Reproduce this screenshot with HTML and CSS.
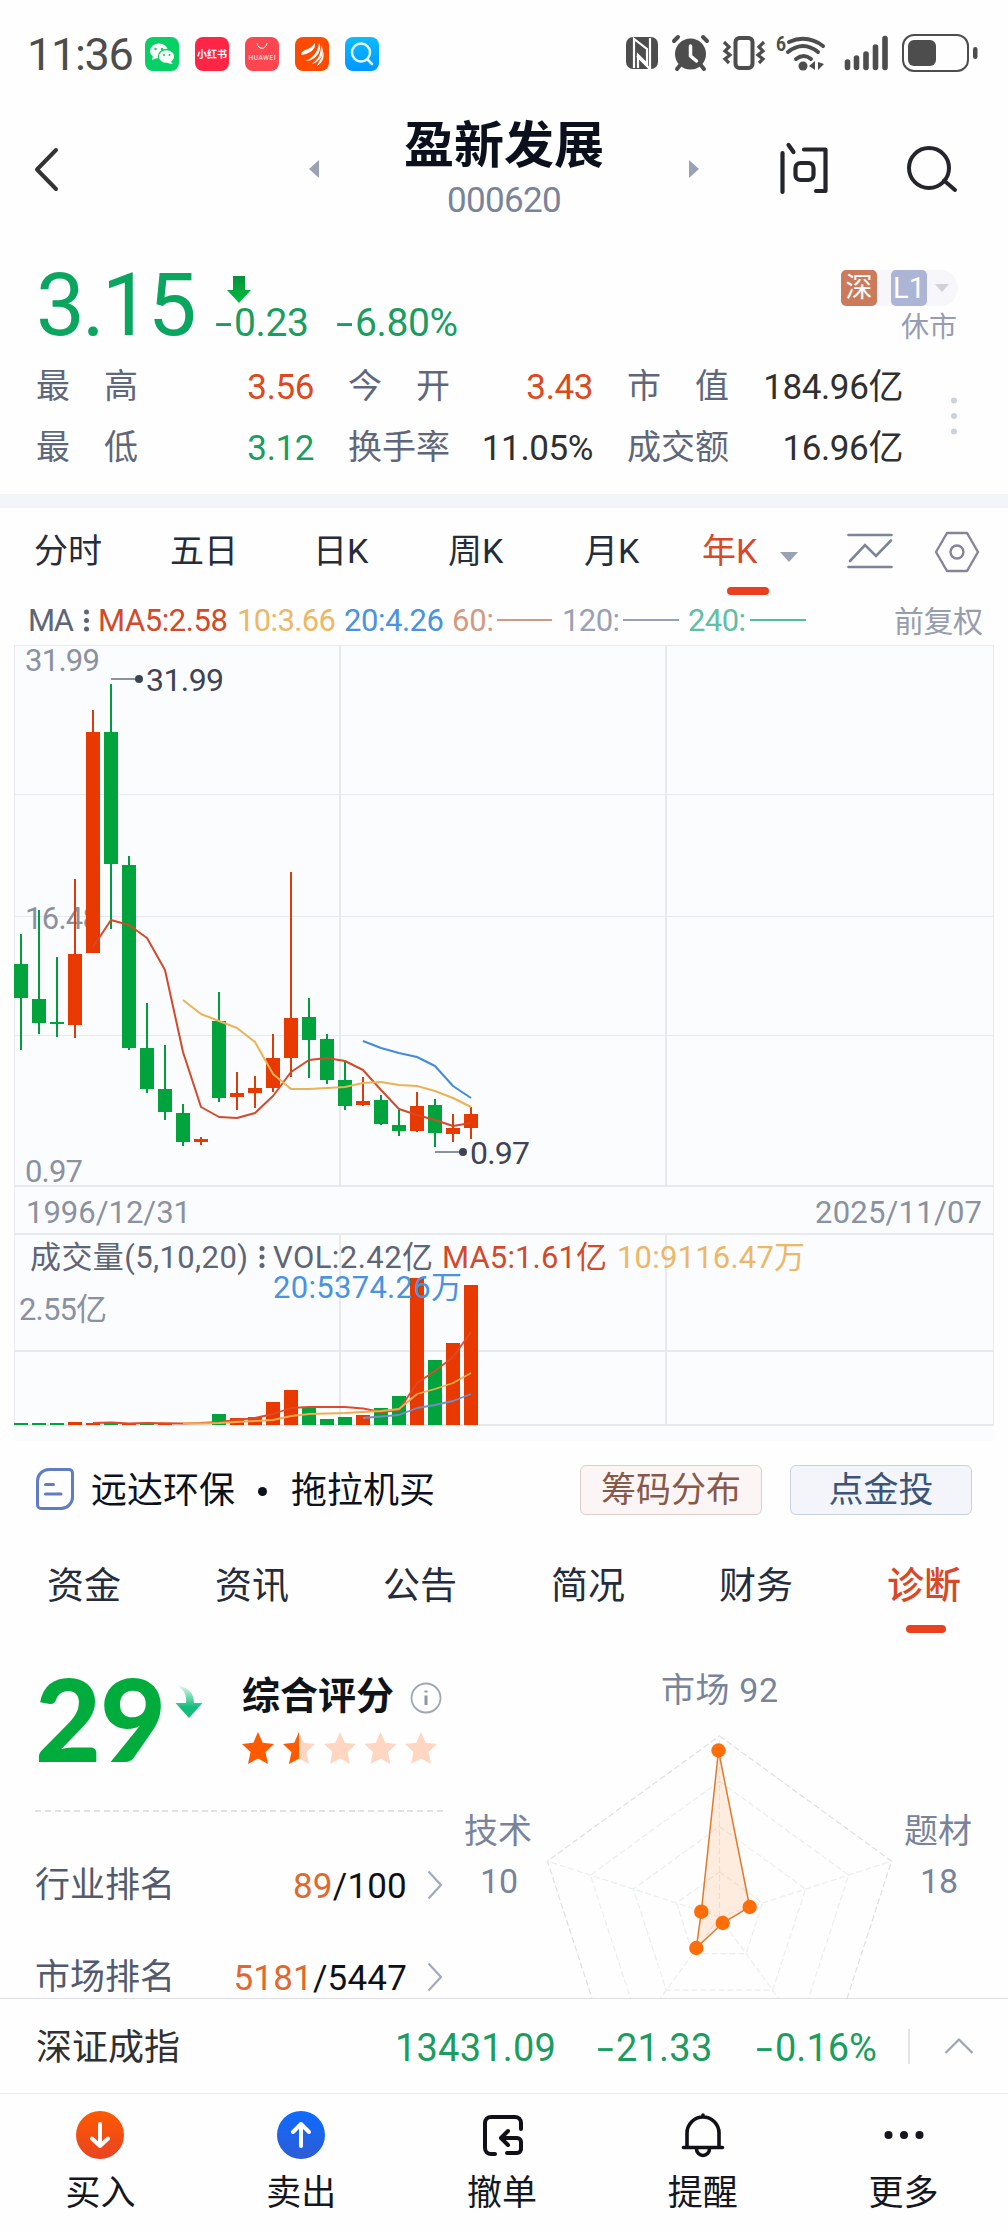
FILE: index.html
```html
<!DOCTYPE html>
<html lang="zh-CN">
<head>
<meta charset="utf-8">
<title>盈新发展 000620</title>
<link rel="stylesheet" href="styles.css">
</head>
<body>
<div class="status">
  <span class="clock">11:36</span>
  <div class="apps">
    <svg class="app wechat" viewBox="0 0 34 34"><g fill="#fff"><ellipse cx="14" cy="14" rx="9" ry="7.5"/><path d="M8 19l-1 4 5-2z"/></g><ellipse cx="21.500" cy="19.500" rx="8.200" ry="7" fill="#fff" stroke="#08cf66" stroke-width="1.300"/><path d="M25 24l3 3-6-1z" fill="#fff"/><g fill="#08cf66"><circle cx="10.500" cy="12" r="1.200"/><circle cx="17" cy="12" r="1.200"/><circle cx="19" cy="18" r="1"/><circle cx="24.500" cy="18" r="1"/></g></svg>
    <span class="app red-book">小红书</span>
    <svg class="app huawei" viewBox="0 0 34 34"><path d="M12 6c1 7 9 7 10 0" fill="none" stroke="#fff" stroke-width="1"/><text x="3.500" y="22.500" textLength="27" fill="#fff" font-size="6.500">HUAWEI</text></svg>
    <svg class="app wing" viewBox="0 0 34 34"><path d="M6 18C7 11 15 14 20 6c1 7-6 11-14 12zM11 24c8-4 12-10 13-18 4 8-4 18-13 18zM17 27c7-5 9-11 9-19 5 8-1 17-9 19zM22 29c1-4 6-8 6-15 2 7-1 12-6 15z" fill="#fff"/></svg>
    <svg class="app finder" viewBox="0 0 34 34"><circle cx="16" cy="15.500" r="9" fill="none" stroke="#e5fbff" stroke-width="2.500"/><path d="M22 22l5 5" stroke="#e5fbff" stroke-width="2.500" stroke-linecap="round"/></svg>
  </div>
  <svg class="signals" viewBox="620 30 362 46" fill="#4d4d4d">
    <rect x="626" y="37" width="32" height="32" rx="7"/>
    <path d="M634 68V39l13 10v15l-9-9v13M650 38v31l-13-13" fill="none" stroke="#fff" stroke-width="2.200"/>
    <circle cx="690.500" cy="54" r="15.500"/>
    <path d="M674 41l4-4M703 37l4 4M677 69l4-5M704 69l-4-5" stroke="#4d4d4d" stroke-width="4" stroke-linecap="round"/>
    <path d="M690.500 46v10l6 5" fill="none" stroke="#fff" stroke-width="3.500" stroke-linecap="round"/>
    <rect x="735.500" y="38" width="17" height="30" rx="4" fill="none" stroke="#4d4d4d" stroke-width="4"/>
    <path d="M724 42l5 5-4 4 5 4-5 4 4 4M764 42l-5 5 4 4-5 4 5 4-4 4" fill="none" stroke="#4d4d4d" stroke-width="3.200"/>
    <text x="776" y="51" font-size="20" font-weight="700" textLength="10" lengthAdjust="spacingAndGlyphs">6</text>
    <path d="M789 42q18-8 34 4M788 52q15-12 30 0M796 59q8-6 15 0" fill="none" stroke="#4d4d4d" stroke-width="4" stroke-linecap="round"/>
    <circle cx="803" cy="66" r="4.500"/><path d="M809 66l6-5v9zM824 64l-6-2v8z"/>
    <path d="M847.500 62v5.500M856.500 58v9.500M866 54v13.500M875.500 47v20.500M885 38.500v29" stroke="#4d4d4d" stroke-width="5.600" stroke-linecap="round"/>
    <rect x="903" y="35" width="65" height="36" rx="11" fill="none" stroke="#4d4d4d" stroke-width="2"/>
    <rect x="908" y="40" width="28" height="26" rx="6"/><rect x="973" y="47" width="4.500" height="12" rx="2.200"/>
  </svg>
</div>

<header class="head">
  <svg class="back" viewBox="0 0 28 48"><path d="M24 4L5 23.500 24 43" fill="none" stroke="#333" stroke-width="4" stroke-linecap="round" stroke-linejoin="round"/></svg>
  <i class="tri left"></i>
  <div class="stock"><h1>盈新发展</h1><p>000620</p></div>
  <i class="tri right"></i>
  <svg class="ask" viewBox="0 0 52 54"><g fill="none" stroke="#24262b" stroke-width="4.200" stroke-linecap="round" stroke-linejoin="round"><path d="M4.500 11v39M10.500 3l5 7M26 7.500h21.500V49H38"/><rect x="17.500" y="21" width="18" height="17" rx="5"/></g></svg>
  <svg class="find" viewBox="0 0 54 50"><g fill="none" stroke="#24262b" stroke-width="4" stroke-linecap="round"><circle cx="24" cy="24" r="20"/><path d="M39 36.500l11 9.500"/></g></svg>
</header>

<section class="quote">
  <div class="price-row">
    <strong class="price">3.15</strong>
    <div class="change">
      <svg class="drop" viewBox="0 0 24 27"><defs><linearGradient id="dg" x2="0" y2="1"><stop stop-color="#07903a"/><stop offset="1" stop-color="#00bd42"/></linearGradient></defs><path d="M6 0h12v14h6L12 27 0 14h6z" fill="url(#dg)"/></svg>
      <div class="delta"><span><b class="neg">-</b>0.23</span><span><b class="neg">-</b>6.80%</span></div>
    </div>
    <div class="market">
      <div class="badges"><span class="sz">深</span><span class="lv">L1</span><i class="tri down pale"></i></div>
      <span class="closed">休市</span>
    </div>
  </div>
  <div class="stats-wrap">
    <dl class="stats">
      <dt><span>最</span><span>高</span></dt><dd class="up">3.56</dd>
      <dt><span>今</span><span>开</span></dt><dd class="up">3.43</dd>
      <dt><span>市</span><span>值</span></dt><dd>184.96亿</dd>
      <dt><span>最</span><span>低</span></dt><dd class="dn">3.12</dd>
      <dt>换手率</dt><dd>11.05%</dd>
      <dt>成交额</dt><dd>16.96亿</dd>
    </dl>
    <svg class="kebab" viewBox="0 0 6 38"><g fill="#cbd2dc"><circle cx="3" cy="3.500" r="3"/><circle cx="3" cy="19" r="3"/><circle cx="3" cy="34.500" r="3"/></g></svg>
  </div>
</section>

<nav class="periods">
  <span>分时</span><span>五日</span><span>日K</span><span>周K</span><span>月K</span><span class="on">年K</span>
  <i class="tri down"></i>
  <svg class="p-line" viewBox="0 0 46 38"><g fill="none" stroke="#7b8596" stroke-width="2.600" stroke-linecap="round"><path d="M1.500 3h43M1.500 35h43"/><path d="M3 29l15-16 11 11L44 8.500"/></g></svg>
  <svg class="p-hex" viewBox="0 0 46 42"><g fill="none" stroke="#85859a" stroke-width="2.400" stroke-linejoin="round"><path d="M13 2h20l11 19-11 19H13L2 21z"/><circle cx="23" cy="21" r="6.500"/></g></svg>
</nav>

<svg class="legend" viewBox="0 600 1008 45" font-size="31">
  <text x="28" y="631" textLength="46" fill="#5d6576">MA</text>
  <g fill="#5d6576"><circle cx="86.500" cy="612" r="2.500"/><circle cx="86.500" cy="620.500" r="2.500"/><circle cx="86.500" cy="629" r="2.500"/></g>
  <text x="98" y="631" textLength="130" fill="#d24a2b">MA5:2.58</text>
  <text x="237" y="631" textLength="99" fill="#ecb868">10:3.66</text>
  <text x="344" y="631" textLength="100" fill="#4a93de">20:4.26</text>
  <text x="452" y="631" textLength="42" fill="#d29a83">60:</text>
  <text x="562" y="631" textLength="58" fill="#9aa1b7">120:</text>
  <text x="688" y="631" textLength="58" fill="#61bfa6">240:</text>
  <g stroke-width="2"><path d="M497 620h55" stroke="#d29a83"/><path d="M623 620h56" stroke="#9aa1b7"/><path d="M750 620h56" stroke="#4fbfa1"/></g>
  <text x="894" y="632" font-size="30" textLength="89" fill="#979dac">前复权</text>
</svg>

<svg class="chart" viewBox="0 645 1008 796" font-size="31">
  <rect x="14" y="645" width="980" height="796" fill="#fbfcfe"/>
  <g fill="none" stroke="#e7e9ef"><path d="M14.500 1425V645.500h979V1425" stroke-width="1"/><path d="M14 794.500h980M14 916.500h980M14 1035.500h980" stroke-width="1.200"/><path d="M340 645v541M666 645v541M340 1234v191M666 1234v191M14 1186h980M14 1234h980M14 1351h980M14 1425h980" stroke-width="2"/></g>
  <g fill="#8a91a0">
    <text x="25" y="671" textLength="75">31.99</text>
    <text x="25" y="929" textLength="75">16.48</text>
    <text x="25" y="1182" textLength="58">0.97</text>
    <text x="26" y="1223" textLength="165">1996/12/31</text>
    <text x="815" y="1223" textLength="167">2025/11/07</text>
    <text x="19" y="1320" textLength="88">2.55亿</text>
  </g>
  <g stroke-width="2">
    <path stroke="#009d3d" d="M21 934V1050M39 910V1034M57 957V1037M111 684V929M129 856V1050M147 1003V1093M165 1045V1120M183 1104V1146M219 992V1102M309 998V1078M327 1034V1084M345 1062V1110M381 1095V1125M399 1110V1136M435 1099V1147"/>
    <path stroke="#dc3b0c" d="M75 879V1038M93 710V953M201 1137V1145M237 1072V1110M255 1076V1108M273 1034V1092M291 872V1077M363 1077V1106M417 1092V1132M453 1114V1142M471 1107V1139"/>
  </g>
  <path fill="#01a33c" d="M14 964h14v34h-14zM32 999h14v24h-14zM50 1022h14v2h-14zM104 732h14v132h-14zM122 865h14v183h-14zM140 1048h14v41h-14zM158 1089h14v23h-14zM176 1113h14v29h-14zM212 1021h14v77h-14zM302 1017h14v23h-14zM320 1039h14v41h-14zM338 1080h14v26h-14zM374 1100h14v24h-14zM392 1125h14v6h-14zM428 1105h14v28h-14z"/>
  <path fill="#e83900" d="M68 954h14v71h-14zM86 732h14v221h-14zM194 1139h14v3h-14zM230 1093h14v4h-14zM248 1088h14v5h-14zM266 1058h14v30h-14zM284 1018h14v40h-14zM356 1101h14v4h-14zM410 1106h14v25h-14zM446 1128h14v6h-14zM464 1114h14v14h-14z"/>
  <g fill="none" stroke-width="2" stroke-linejoin="round">
    <path stroke="#d24a2b" d="M93 947L111 920L129 925L147 938L165 970L183 1052L201 1107L219 1117L237 1118L255 1113L273 1096L291 1072L309 1060L327 1058L345 1061L363 1070L381 1090L399 1109L417 1115L435 1120L453 1126L471 1123"/>
    <path stroke="#ecb256" d="M183 1000L201 1014L219 1021L237 1028L255 1042L273 1074L291 1089L309 1089L327 1088L345 1087L363 1083L381 1082L399 1085L417 1086L435 1091L453 1098L471 1107"/>
    <path stroke="#438bd8" d="M363 1041L381 1048L399 1053L417 1057L435 1066L453 1086L471 1098"/>
  </g>
  <path d="M111 679h28M435 1152h28" stroke="#8d929c" stroke-width="2"/>
  <g fill="#3e4453"><circle cx="139" cy="679" r="4"/><circle cx="463" cy="1152" r="4"/><text x="146" y="691" font-size="32" textLength="78">31.99</text><text x="470" y="1164" font-size="32" textLength="60">0.97</text></g>

  <path fill="#01a33c" d="M14 1423h14v2h-14zM32 1423h14v2h-14zM50 1423h14v2h-14zM104 1423h14v2h-14zM140 1423h14v2h-14zM212 1414h14v11h-14zM302 1407h14v18h-14zM320 1419h14v6h-14zM338 1417h14v8h-14zM374 1408h14v17h-14zM392 1396h14v29h-14zM428 1360h14v65h-14z"/>
  <path fill="#e83900" d="M68 1422h14v3h-14zM86 1423h14v2h-14zM122 1424h14v1h-14zM158 1424h14v1h-14zM230 1418h14v7h-14zM248 1417h14v8h-14zM266 1402h14v23h-14zM284 1390h14v35h-14zM356 1415h14v10h-14zM410 1278h14v147h-14zM446 1343h14v82h-14zM464 1285h14v140h-14z"/>
  <g fill="none" stroke-width="1.800" stroke-linejoin="round">
    <path stroke="#e04a2a" d="M93 1423L111 1422.500L129 1423.500L147 1423L183 1423.500L201 1423L219 1422L237 1420L255 1418L273 1414L291 1408L309 1407L345 1407L363 1408.500L381 1412L399 1410L417 1383L435 1371L453 1357L471 1332"/>
    <path stroke="#f2ac4c" d="M183 1423L201 1423.500L219 1423L255 1421L273 1420L291 1416L309 1414L345 1413L381 1411L399 1409L417 1394L435 1389L453 1383L471 1373"/>
    <path stroke="#6f8fcb" d="M363 1418L399 1415L417 1408L435 1405L453 1401L471 1394"/>
  </g>
  <g fill="#5d6576">
    <text x="30" y="1268" textLength="218">成交量(5,10,20)</text>
    <circle cx="262" cy="1248.500" r="2.500"/><circle cx="262" cy="1257" r="2.500"/><circle cx="262" cy="1265.500" r="2.500"/>
    <text x="273" y="1268" textLength="160">VOL:2.42亿</text>
  </g>
  <text x="442" y="1268" textLength="165" fill="#d24a2b">MA5:1.61亿</text>
  <text x="617" y="1268" textLength="188" fill="#ecb868">10:9116.47万</text>
  <text x="273" y="1298" textLength="189" fill="#4a93de">20:5374.26万</text>
</svg>

<section class="notice">
  <svg class="doc" viewBox="0 0 38 42"><g fill="none" stroke="#5f7dc4" stroke-width="3" stroke-linecap="round"><path d="M13 1.500h20a3.500 3.500 0 0 1 3.500 3.500v24a11.500 11.500 0 0 1-11.500 11.500H5A3.500 3.500 0 0 1 1.500 37V13A11.500 11.500 0 0 1 13 1.500z"/><path d="M9.500 16.500h8M9.500 26h15.500"/></g></svg>
  <p><span>远达环保</span><b class="bullet"></b><span>拖拉机买</span></p>
  <button class="pill chips">筹码分布</button>
  <button class="pill gold">点金投</button>
</section>

<nav class="tabs"><span>资金</span><span>资讯</span><span>公告</span><span>简况</span><span>财务</span><span class="on">诊断</span></nav>

<section class="diagnosis">
  <div class="scores">
    <div class="total">
      <strong>29</strong>
      <svg class="curve" viewBox="0 0 28 32"><defs><linearGradient id="cg" x2="0" y2="1"><stop stop-color="#d9f5ea"/><stop offset=".65" stop-color="#15bd7d"/></linearGradient></defs><path d="M3 0c9 1 16 6 16 17h8.500L14 32 .5 17H11C12 9 9 4 3 0z" fill="url(#cg)"/></svg>
      <div class="rating">
        <h2>综合评分 <svg class="info" viewBox="0 0 32 32"><circle cx="16" cy="16" r="14.500" fill="none" stroke="#a0a6b8" stroke-width="1.800"/><path d="M16 13.500V23M16 8.500v2" stroke="#8f95a8" stroke-width="3"/></svg></h2>
        <svg class="stars" viewBox="0 0 196 34">
          <defs><path id="star" d="M16 0l4.700 10.700L32 12l-8.500 7.900L26 32l-10-5.600L6 32l2.500-12.100L0 12l11.300-1.300z"/><clipPath id="half"><path d="M0 0h16v34H0z"/></clipPath></defs>
          <use href="#star" x="0" fill="#ff5a00"/><use href="#star" x="41" fill="#fed6c1"/><g transform="translate(41)"><use href="#star" fill="#ff5a00" clip-path="url(#half)"/></g><use href="#star" x="82" fill="#fed6c1"/><use href="#star" x="122.500" fill="#fed6c1"/><use href="#star" x="163" fill="#fed6c1"/>
        </svg>
      </div>
    </div>
    <div class="dash"></div>
    <div class="rank"><span>行业排名</span><b><em>89</em>/100</b><svg viewBox="0 0 16 30"><path d="M1.500 1.500L14 15 1.500 28.500" fill="none" stroke="#a3a9b8" stroke-width="2.200"/></svg></div>
    <div class="rank"><span>市场排名</span><b><em>5181</em>/5447</b><svg viewBox="0 0 16 30"><path d="M1.500 1.500L14 15 1.500 28.500" fill="none" stroke="#a3a9b8" stroke-width="2.200"/></svg></div>
  </div>
  <svg class="radar" viewBox="460 1640 548 359" font-size="34" fill="#79839a">
    <g fill="none" stroke="#e9eeee" stroke-width="1.200" stroke-dasharray="6 3">
      <path d="M719.500 1736L891.600 1861.100L825.900 2063.400H613.100L547.400 1861.100z" stroke="#dce1e1"/>
      <path d="M719.500 1781.300L848.600 1875.100L799.300 2026.800H639.700L590.400 1875.100z"/>
      <path d="M719.500 1826.500L805.600 1889L772.700 1990.200H666.300L633.400 1889z"/>
      <path d="M719.500 1871.800L762.500 1903L746.100 1953.600H692.900L676.500 1903z"/>
      <path d="M719.500 1917V1736M719.500 1917L891.600 1861.100M719.500 1917L825.900 2063.400M719.500 1917L613.100 2063.400M719.500 1917L547.400 1861.100"/>
    </g>
    <path d="M718.500 1750.500L749.700 1907L722.700 1923L696.300 1948L701.300 1911.700z" fill="#ff6a00" fill-opacity=".12" stroke="#e07a2e" stroke-width="1.500"/>
    <g fill="#ff6d08"><circle cx="718.500" cy="1750.500" r="7.200"/><circle cx="749.700" cy="1907" r="7.200"/><circle cx="722.700" cy="1923" r="7.200"/><circle cx="696.300" cy="1948" r="7.200"/><circle cx="701.300" cy="1911.700" r="7.200"/></g>
    <text x="661" y="1702" textLength="117">市场 92</text>
    <text x="464" y="1843" textLength="68">技术</text><text x="480" y="1893" textLength="38">10</text>
    <text x="904" y="1843" textLength="68">题材</text><text x="920" y="1893" textLength="38">18</text>
  </svg>
</section>

<section class="index">
  <span class="name">深证成指</span>
  <span class="i-val">13431.09</span>
  <span class="i-chg"><b class="neg">-</b>21.33</span>
  <span class="i-pct"><b class="neg">-</b>0.16%</span>
  <i class="bar"></i>
  <svg class="expand" viewBox="0 0 30 18"><path d="M1.500 16L15 2.500 28.500 16" fill="none" stroke="#a0a3b5" stroke-width="2.200"/></svg>
</section>

<nav class="actions">
  <div><svg viewBox="0 0 48 48"><defs><linearGradient id="bg1" x2="0" y2="1"><stop stop-color="#ff5a00"/><stop offset="1" stop-color="#e84324"/></linearGradient></defs><circle cx="24" cy="24" r="24" fill="url(#bg1)"/><path d="M24 13v22M16 27.500l8 7.500 8-7.500" fill="none" stroke="#fff" stroke-width="4" stroke-linecap="round" stroke-linejoin="round"/></svg><span>买入</span></div>
  <div><svg viewBox="0 0 48 48"><defs><linearGradient id="bg2" x2="0" y2="1"><stop stop-color="#0d6bff"/><stop offset="1" stop-color="#2f5cd4"/></linearGradient></defs><circle cx="24" cy="24" r="24" fill="url(#bg2)"/><path d="M24 35V13M16 21l8-8 8 8" fill="none" stroke="#fff" stroke-width="4" stroke-linecap="round" stroke-linejoin="round"/></svg><span>卖出</span></div>
  <div><svg viewBox="0 0 48 48"><g fill="none" stroke="#0f1116" stroke-width="4" stroke-linecap="round" stroke-linejoin="round"><path d="M17 43h-4a6 6 0 0 1-6-6V12a6 6 0 0 1 6-6h24a6 6 0 0 1 6 6v6"/><path d="M30 20l-7 7 7 7M24 27h15a4 4 0 0 1 4 4v7a4 4 0 0 1-4 4H29"/></g></svg><span>撤单</span></div>
  <div><svg viewBox="0 0 48 48"><g fill="none" stroke="#0f1116" stroke-width="3.600" stroke-linecap="round" stroke-linejoin="round"><path d="M4.500 36.500h39M8 36V22a16 16 0 0 1 32 0v14M24 4v2M17.500 38a6.500 6.500 0 0 0 13 0"/></g></svg><span>提醒</span></div>
  <div><svg viewBox="0 0 48 48"><g fill="#14161b"><circle cx="8.500" cy="24" r="4"/><circle cx="24" cy="24" r="4"/><circle cx="39.500" cy="24" r="4"/></g></svg><span>更多</span></div>
</nav>
</body>
</html>
```
FILE: styles.css
```css
* { box-sizing: border-box; }
body {
  margin: 0;
  width: 1008px;
  height: 2232px;
  overflow: hidden;
  background: #fefefe;
  color: #2a3040;
  font-family: Roboto, "Noto Sans CJK SC", sans-serif;
  font-size: 34px;
  line-height: 1;
}
h1, h2, p, dl, dd { margin: 0; }
svg { display: block; flex: none; }
.tri { width: 0; height: 0; border: 9px solid transparent; flex: none; }
.tri.left { border-left: 0; border-right: 10px solid #9ba2b6; }
.tri.right { border-right: 0; border-left: 10px solid #9ba2b6; }
.tri.down { border-bottom: 0; border-top: 10px solid #9ba2b6; }
.tri.down.pale { border-width: 8px 7.5px 0; border-top-color: #d1d1da; }
.neg { display: inline-block; width: 19px; font-weight: 400; transform-origin: 0 50%; transform: scaleX(1.6); }

.status { height: 100px; display: flex; align-items: flex-start; padding-left: 27px; }
.clock { width: 118px; padding-top: 32px; font-size: 45px; letter-spacing: -1.3px; color: #4d4d4d; }
.apps { display: flex; gap: 16px; padding-top: 37px; }
.app { width: 34px; height: 34px; border-radius: 8px; overflow: hidden; }
.wechat { background: #08cf66; }
.red-book { background: #ff2545; color: #fff; font: 700 10px/34px "Noto Sans CJK SC", sans-serif; text-align: center; }
.huawei { background: #fc4650; }
.wing { background: #ff4b00; }
.finder { background: linear-gradient(#0dbcff, #0096ff); }
.signals { width: 362px; height: 46px; margin: 30px 0 0 241px; }

.head { height: 150px; display: flex; align-items: flex-start; }
.back { width: 28px; height: 48px; margin: 46px 0 0 32px; }
.tri.left { margin: 60px 0 0 249px; }
.stock { width: 370px; text-align: center; }
.stock h1 { padding-top: 20px; font-size: 50px; line-height: 52px; font-weight: 700; color: #0b101c; }
.stock p { margin-top: 9px; font-size: 35px; letter-spacing: -.7px; line-height: 40px; color: #79839a; }
.tri.right { margin-top: 60px; }
.ask { width: 52px; height: 54px; margin: 42px 0 0 79px; }
.find { width: 54px; height: 50px; margin: 44px 0 0 75px; }

.quote { height: 258px; border-bottom: 14px solid #f3f5fa; }
.price-row { height: 105px; display: flex; align-items: flex-start; padding-left: 36px; }
.price { width: 179px; padding-top: 12px; font-size: 87px; font-weight: 400; letter-spacing: -3px; color: #0aa55f; }
.drop { width: 24px; height: 27px; margin: 26px 0 0 12px; }
.delta { display: flex; margin-top: 1px; font-size: 39px; color: #1a9d60; letter-spacing: -.4px; }
.delta span { width: 121px; white-space: nowrap; }
.market { margin: 20px 50px 0 auto; display: flex; flex-direction: column; align-items: flex-end; }
.badges { display: flex; align-items: center; height: 36px; width: 117px; background: #f6f6fb; border-radius: 6px 18px 18px 6px; }
.badges span { width: 36px; height: 36px; border-radius: 5px; text-align: center; color: #fff; line-height: 36px; }
.sz { background: #cc7a5c; font-size: 27px; margin-right: 14px; }
.lv { background: #acb5d5; font-size: 29px; margin-right: 8px; }
.closed { margin: 7px 1px 0 0; font-size: 28px; line-height: 29px; color: #969db0; }
.stats-wrap { display: flex; align-items: flex-start; }
.stats { width: 903px; display: grid; grid-template-columns: 102px 210px 102px 177px 102px 174px; grid-auto-rows: 61px; padding: 1px 0 0 36px; }
.stats dt { display: flex; justify-content: space-between; line-height: 61px; color: #5f677a; }
.stats dd { text-align: right; line-height: 63px; font-size: 35px; letter-spacing: -.4px; color: #303030; }
.stats dd:nth-of-type(3n + 1), .stats dd:nth-of-type(3n + 2) { padding-right: 34px; }
.stats dd.up { color: #dc4a1c; }
.stats dd.dn { color: #1a9d60; }
.kebab { width: 6px; height: 38px; margin: 42px 0 0 48px; }

.periods { height: 92px; display: flex; align-items: flex-start; line-height: 87px; color: #252c3c; padding-left: 34px; }
.periods span { width: 136px; white-space: nowrap; position: relative; }
.periods span:nth-child(2) { width: 143px; }
.periods span:nth-child(3) { width: 135px; }
.periods span:nth-child(4) { width: 136px; }
.periods span:nth-child(5) { width: 118px; }
.periods .on { width: 78px; color: #d8492a; }
.periods .on::after { content: ""; position: absolute; left: 25px; top: 79px; width: 42px; height: 8px; border-radius: 4px; background: #e9411f; }
.periods .tri { margin-top: 44px; }
.p-line { width: 46px; height: 38px; margin: 24px 0 0 49px; }
.p-hex { width: 46px; height: 42px; margin: 23px 0 0 41px; }

.legend { width: 1008px; height: 45px; }
.chart { width: 1008px; height: 796px; }

.notice { height: 99px; display: flex; align-items: flex-start; padding-left: 36px; }
.doc { width: 38px; height: 42px; margin-top: 27px; }
.notice p { width: 506px; flex: none; display: flex; align-items: center; padding-left: 17px; font-size: 36px; line-height: 100px; color: #0c111d; }
.bullet { width: 9px; height: 9px; border-radius: 50%; background: #0c111d; margin: 0 24px 0 23px; }
.pill { width: 182px; height: 50px; margin: 24px 28px 0 0; padding: 0 0 6px; border-radius: 6px; font: 35px/42px "Noto Sans CJK SC", sans-serif; flex: none; }
.pill.chips { border: 1px solid #dccfcb; background: #fbf6f5; color: #87594a; }
.pill.gold { margin-right: 0; border: 1px solid #c9d1dd; background: #f3f5fa; color: #3b5478; }

.tabs { height: 100px; display: grid; grid-template-columns: repeat(6, 1fr); text-align: center; font-size: 37px; line-height: 94px; color: #252c3c; }
.tabs .on { color: #d8492a; font-weight: 500; position: relative; }
.tabs .on::after { content: ""; position: absolute; left: 66px; top: 85px; width: 40px; height: 8px; border-radius: 4px; background: #e9411f; }

.diagnosis { height: 359px; display: grid; grid-template-columns: 460px 548px; overflow: hidden; }
.total { height: 170px; display: flex; padding-left: 35px; }
.total strong { width: 140px; padding-top: 21px; font: 900 114px/114px Lato, sans-serif; letter-spacing: -1px; color: #00ad3c; }
.curve { width: 28px; height: 32px; margin-top: 46px; }
.rating { margin-left: 39px; }
.rating h2 { display: flex; align-items: center; gap: 16px; padding-top: 34px; font-size: 38px; line-height: 44px; font-weight: 700; color: #101318; }
.info { width: 32px; height: 32px; margin-top: 3px; }
.stars { width: 196px; height: 34px; margin-top: 14px; }
.dash { width: 411px; height: 2px; margin-left: 35px; background: repeating-linear-gradient(90deg, #dfe3e6 0 6px, transparent 6px 9.800px); }
.rank { height: 92px; display: flex; align-items: center; padding: 0 17px 0 35px; color: #525b6d; font-size: 35px; }
.dash + .rank { margin-top: 27px; }
.rank b { margin-left: auto; font-weight: 400; color: #0f1116; padding-top: 2px; letter-spacing: .2px; }
.rank em { font-style: normal; color: #e0692f; }
.rank svg { width: 16px; height: 30px; margin-left: 20px; }
.radar { width: 548px; height: 359px; }

.index { height: 96px; padding-top: 3px; margin-top: -1px; position: relative; border-top: 1px solid #dedfe2; border-bottom: 1px solid #ebebeb; background: #fefefe; display: flex; align-items: center; padding-left: 36px; font-size: 38px; color: #1a9d60; }
.index .name { width: 359px; font-size: 36px; color: #303030; }
.i-val { width: 202px; letter-spacing: .2px; }
.i-chg { width: 159px; letter-spacing: .2px; }
.i-pct { width: 152px; white-space: nowrap; }
.bar { width: 2px; height: 35px; margin-top: -3px; background: #e3e4e9; }
.expand { width: 30px; height: 18px; margin: -3px 0 0 34px; }

.actions { width: 1004px; height: 138px; display: grid; grid-template-columns: repeat(5, 1fr); color: #14171f; }
.actions div { display: flex; flex-direction: column; align-items: center; padding-top: 17px; }
.actions svg { width: 48px; height: 48px; }
.actions span { font-size: 35px; line-height: 50px; margin-top: 10px; }
```
